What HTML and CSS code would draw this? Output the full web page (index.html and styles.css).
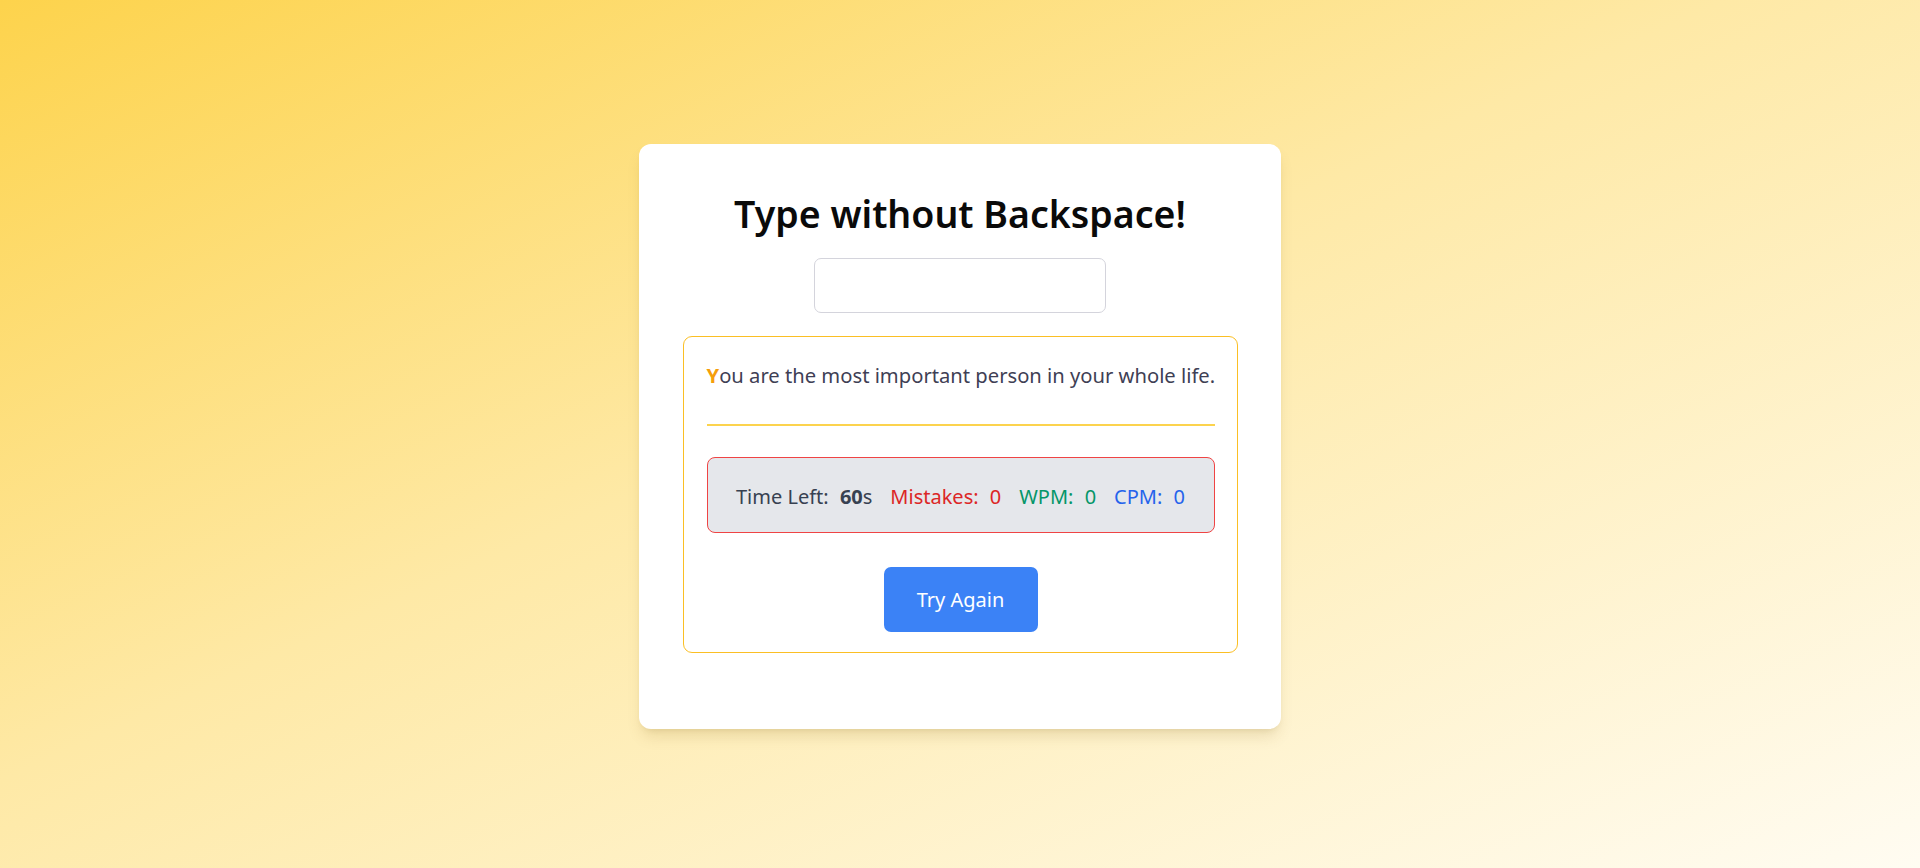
FILE: index.html
```html
<!DOCTYPE html>
<html lang="en">
<head>
<meta charset="utf-8">
<title>Type without Backspace!</title>
<link rel="stylesheet" href="styles.css">
</head>
<body>
<div class="page">
  <main class="card">
    <h1 class="title">Type without Backspace!</h1>
    <input class="type-input" type="text" aria-label="Type here">
    <section class="game">
      <p class="sentence"><span class="current">Y</span>ou are the most important person in your whole life.</p>
      <div class="stats">
        <span class="stat stat-time">Time Left: <b class="val">60</b>s</span>
        <span class="stat stat-mistakes">Mistakes: <span class="val">0</span></span>
        <span class="stat stat-wpm">WPM: <span class="val">0</span></span>
        <span class="stat stat-cpm">CPM: <span class="val">0</span></span>
      </div>
      <div class="actions">
        <button class="btn" type="button">Try Again</button>
      </div>
    </section>
  </main>
</div>
</body>
</html>
```

FILE: styles.css
```css
html, body {
  margin: 0;
  padding: 0;
}

body {
  font-family: "Noto Sans", "Open Sans", Arial, sans-serif;
  background: linear-gradient(to bottom right, #fdd34c 0%, #fee9a6 45%, #fffcf2 100%);
  min-height: 100vh;
}

.page {
  min-height: 100vh;
  box-sizing: border-box;
  display: flex;
  justify-content: center;
  align-items: flex-start;
  padding-top: 144px;
}

.card {
  width: 642px;
  box-sizing: border-box;
  background: #ffffff;
  border-radius: 12px;
  box-shadow: 0 10px 15px -3px rgba(120, 90, 0, 0.15), 0 4px 6px -4px rgba(120, 90, 0, 0.15);
  padding: 50px 0 76px;
  display: flex;
  flex-direction: column;
  align-items: center;
}

.title {
  margin: 0;
  font-size: 37.5px;
  line-height: 40px;
  font-weight: 600;
  color: #0a0a0a;
  text-align: center;
}

.type-input {
  margin-top: 24px;
  width: 292px;
  height: 55px;
  box-sizing: border-box;
  border: 1px solid #d4d4dc;
  border-radius: 7px;
  background: #fff;
  outline: none;
  font-family: inherit;
  font-size: 20px;
  padding: 0 12px;
}

.game {
  margin-top: 23px;
  width: 555px;
  box-sizing: border-box;
  border: 1px solid #fbbf24;
  border-radius: 9px;
  padding: 24px 22px 20px 23px;
}

.sentence {
  margin: 0;
  font-size: 20.2px;
  line-height: 28px;
  color: #3f3f55;
  padding-bottom: 35px;
  border-bottom: 2px solid #fcd34d;
  white-space: nowrap;
}

.current {
  color: #f59e0b;
  font-weight: 700;
}

.stats {
  margin-top: 31px;
  height: 76px;
  box-sizing: border-box;
  padding-top: 3px;
  border: 1px solid #ef4444;
  border-radius: 8px;
  background: #e5e7eb;
  display: flex;
  justify-content: center;
  align-items: center;
  gap: 18px;
  font-size: 20px;
  line-height: 28px;
}

.stat .val {
  margin-left: 6px;
}

.stat-time {
  color: #374151;
}

.stat-time b {
  font-weight: 700;
}

.stat-mistakes {
  color: #dc2626;
}

.stat-wpm {
  color: #059669;
}

.stat-cpm {
  color: #2563eb;
}

.actions {
  margin-top: 34px;
  display: flex;
  justify-content: center;
}

.btn {
  width: 154px;
  height: 65px;
  border: none;
  border-radius: 7px;
  background: #3b82f6;
  color: #ffffff;
  font-family: inherit;
  font-size: 20px;
  cursor: pointer;
}
```
